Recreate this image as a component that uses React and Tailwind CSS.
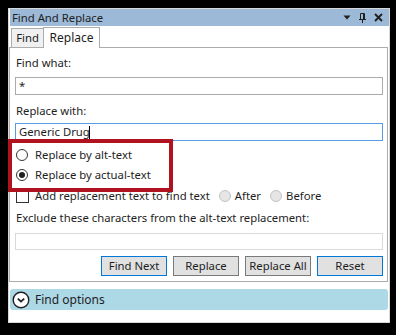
export default function App() {
    const font = { fontFamily: '"Noto Sans", "Open Sans", sans-serif' };

    return (
        <div className="relative w-[396px] h-[335px] bg-black pt-[8px] pl-[8px] pr-[6px] pb-[12px] text-[11.3px] text-[#1e1e1e]" style={font}>
            {/* Window */}
            <div className="h-full bg-white border border-[#d8d8d8] flex flex-col">
                {/* Title bar */}
                <div className="h-[17px] ml-[1px] bg-[#9cb9d7] flex items-center pl-[2px] pr-[6px]">
                    <span className="flex-1 leading-none">Find And Replace</span>
                    <div className="flex items-center gap-[8px]">
                        <svg width="8" height="5" viewBox="0 0 8 5">
                            <path d="M0.5 0.5 H7.5 L4 4.5 Z" fill="#1e1e1e" />
                        </svg>
                        <svg width="7" height="10" viewBox="0 0 7 10">
                            <path d="M1.5 0.5 H5.5 V6.5 H1.5 Z M0 6.5 H7 M3.5 6.5 V10 M4.5 1 V6" stroke="#1e1e1e" strokeWidth="1" fill="none" />
                        </svg>
                        <svg width="9" height="9" viewBox="0 0 9 9">
                            <path d="M1 1 L8 8 M8 1 L1 8" stroke="#1e1e1e" strokeWidth="1.8" />
                        </svg>
                    </div>
                </div>

                {/* Tabs */}
                <div className="flex items-end h-[21px] pl-[2px] relative z-10">
                    <div className="h-[19px] w-[33px] bg-[#f0f0f0] border border-[#acacac] border-b-0 flex items-center justify-center leading-none">
                        Find
                    </div>
                    <div className="h-[21px] w-[57px] bg-white border border-[#acacac] border-b-0 flex items-center justify-center leading-none mb-[-1px] -ml-[1px] text-[12px]">
                        Replace
                    </div>
                </div>

                {/* Panel */}
                <div className="mr-[1px] border border-[#acacac] pl-[5px] pr-[4px] pt-[7px] pb-[5px] flex flex-col">
                    <div className="h-[16px] leading-[16px] pl-[1px]">Find what:</div>
                    <div className="mt-[6px] h-[18px] border border-[#ababab] flex items-center px-[3px] leading-none">*</div>
                    <div className="mt-[8px] h-[16px] leading-[16px] pl-[1px]">Replace with:</div>
                    <div className="mt-[4px] h-[18px] border border-[#569de5] flex items-center px-[3px] leading-none">
                        <span>Generic Drug</span>
                        <span className="w-[1px] h-[13px] bg-black -ml-[1px]"></span>
                    </div>

                    <div className="mt-[6px] h-[16px] flex items-center">
                        <span className="ml-[1px] w-[12px] h-[12px] rounded-full border border-[#333] bg-white"></span>
                        <span className="ml-[7px]">Replace by alt-text</span>
                    </div>
                    <div className="mt-[4px] h-[16px] flex items-center">
                        <span className="ml-[1px] w-[12px] h-[12px] rounded-full border border-[#333] bg-white flex items-center justify-center">
                            <span className="w-[6px] h-[6px] rounded-full bg-[#1e1e1e]"></span>
                        </span>
                        <span className="ml-[7px]">Replace by actual-text</span>
                    </div>
                    <div className="mt-[5px] h-[16px] flex items-center">
                        <span className="ml-[1px] w-[13px] h-[13px] border border-[#333] bg-white"></span>
                        <span className="ml-[6px]">Add replacement text to find text</span>
                        <span className="ml-[9px] w-[12px] h-[12px] rounded-full border border-[#c2c2c2] bg-[#e6e6e6]"></span>
                        <span className="ml-[4px]">After</span>
                        <span className="ml-[9px] w-[12px] h-[12px] rounded-full border border-[#c2c2c2] bg-[#e6e6e6]"></span>
                        <span className="ml-[4px]">Before</span>
                    </div>

                    <div className="mt-[6px] h-[16px] leading-[16px] pl-[1px]">Exclude these characters from the alt-text replacement:</div>
                    <div className="mt-[7px] h-[17px] border border-[#d9d9d9]"></div>

                    <div className="mt-[6px] flex justify-end gap-[6px]">
                        <button className="w-[66px] h-[20px] bg-[#e1e1e1] border border-[#0078d7] leading-none">Find Next</button>
                        <button className="w-[66px] h-[20px] bg-[#e1e1e1] border border-[#7a7a7a] leading-none">Replace</button>
                        <button className="w-[66px] h-[20px] bg-[#e1e1e1] border border-[#7a7a7a] leading-none">Replace All</button>
                        <button className="w-[66px] h-[20px] bg-[#e1e1e1] border border-[#0078d7] leading-none">Reset</button>
                    </div>
                </div>

                {/* Find options */}
                <div className="mt-[7px] ml-[1px] mr-[1px] h-[21px] bg-[#add8e6] rounded-[3px] flex items-center pl-[2px]">
                    <svg width="18" height="18" viewBox="0 0 18 18">
                        <circle cx="9" cy="9" r="7.8" fill="white" stroke="#1e1e1e" strokeWidth="1.4" />
                        <path d="M5.8 7.6 L9 10.6 L12.2 7.6" fill="none" stroke="#1e1e1e" strokeWidth="1.8" />
                    </svg>
                    <span className="ml-[5px] text-[12px] leading-none">Find options</span>
                </div>
            </div>

            {/* Highlight annotation */}
            <div className="absolute left-[8px] top-[139px] w-[165px] h-[53px] border-[4px] border-[#b0121f]"></div>
        </div>
    );
}
